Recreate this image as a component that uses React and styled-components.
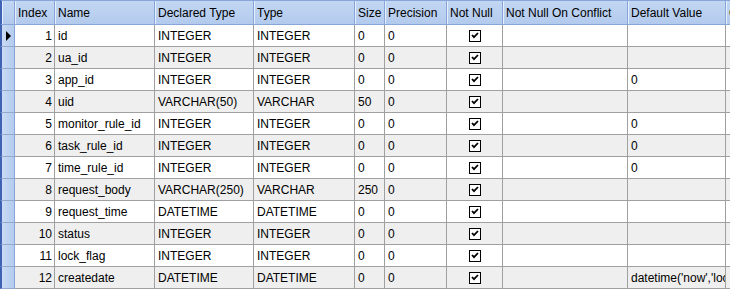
import React from 'react';
import styled, { createGlobalStyle } from 'styled-components';

const GlobalStyle = createGlobalStyle`
  body {
    margin: 0;
    background: #fff;
    font-family: "Liberation Sans", Arial, sans-serif;
  }
`;

const columns = [
  { key: 'index', label: 'Index', width: 40, align: 'right' },
  { key: 'name', label: 'Name', width: 100 },
  { key: 'declared', label: 'Declared Type', width: 99 },
  { key: 'type', label: 'Type', width: 101 },
  { key: 'size', label: 'Size', width: 30 },
  { key: 'precision', label: 'Precision', width: 62 },
  { key: 'notNull', label: 'Not Null', width: 56, align: 'center' },
  { key: 'conflict', label: 'Not Null On Conflict', width: 125 },
  { key: 'def', label: 'Default Value', width: 98 },
  { key: 'collate', label: 'Collate', width: 100 },
];

const rows = [
  ['id', 'INTEGER', 'INTEGER', '0', '0', ''],
  ['ua_id', 'INTEGER', 'INTEGER', '0', '0', ''],
  ['app_id', 'INTEGER', 'INTEGER', '0', '0', '0'],
  ['uid', 'VARCHAR(50)', 'VARCHAR', '50', '0', ''],
  ['monitor_rule_id', 'INTEGER', 'INTEGER', '0', '0', '0'],
  ['task_rule_id', 'INTEGER', 'INTEGER', '0', '0', '0'],
  ['time_rule_id', 'INTEGER', 'INTEGER', '0', '0', '0'],
  ['request_body', 'VARCHAR(250)', 'VARCHAR', '250', '0', ''],
  ['request_time', 'DATETIME', 'DATETIME', '0', '0', ''],
  ['status', 'INTEGER', 'INTEGER', '0', '0', ''],
  ['lock_flag', 'INTEGER', 'INTEGER', '0', '0', ''],
  ['createdate', 'DATETIME', 'DATETIME', '0', '0', "datetime('now','localtime')"],
];

const template = `15px ${columns.map((c) => c.width + 'px').join(' ')}`;

const Grid = styled.div`
  width: 730px;
  height: 291px;
  overflow: hidden;
  font-size: 12px;
  color: #000;
`;

const HeaderRow = styled.div`
  display: grid;
  grid-template-columns: ${template};
  height: 25px;
  width: max-content;
`;

const Row = styled.div`
  display: grid;
  grid-template-columns: ${template};
  height: 22px;
  width: max-content;
  background: ${(p) => (p.$alt ? '#efefef' : '#ffffff')};
`;

const HeaderCell = styled.div`
  box-sizing: border-box;
  display: flex;
  align-items: center;
  padding: 1px 3px 0;
  white-space: nowrap;
  overflow: hidden;
  background: linear-gradient(#c3d7f3, #b2caed);
  border-top: 1px solid #87a5d6;
  border-right: 1px solid #87a5d6;
  border-bottom: 1px solid #87a5d6;
  box-shadow: inset 1px 0 0 #e4eefc;
`;

const Corner = styled(HeaderCell)`
  border-left: 2px solid #3e62b4;
`;

const Indicator = styled.div`
  box-sizing: border-box;
  display: flex;
  align-items: center;
  padding-left: 3px;
  background: linear-gradient(90deg, #c9dbf5, #b3cbee);
  border-left: 2px solid #3e62b4;
  border-right: 1px solid #87a5d6;
  border-bottom: 1px solid #93a9cf;
`;

const Arrow = styled.span`
  width: 0;
  height: 0;
  border-top: 5px solid transparent;
  border-bottom: 5px solid transparent;
  border-left: 5px solid #000;
  margin-left: 1px;
`;

const Cell = styled.div`
  box-sizing: border-box;
  display: flex;
  align-items: center;
  justify-content: ${(p) =>
    p.$align === 'right' ? 'flex-end' : p.$align === 'center' ? 'center' : 'flex-start'};
  padding: 0 ${(p) => (p.$align === 'right' ? '2px' : '3px')} 0 3px;
  white-space: nowrap;
  overflow: hidden;
  border-right: 1px solid #a0a0a0;
  border-bottom: 1px solid #a0a0a0;
`;

const Check = styled.span`
  box-sizing: border-box;
  width: 12px;
  height: 12px;
  border: 1px solid #000;
  background: #fff;
  display: flex;
  align-items: center;
  justify-content: center;
  margin-left: 1px;
`;

const CheckBox = () => (
  <Check>
    <svg width="8" height="7" viewBox="0 0 8 7">
      <path d="M1 3 L3 5.2 L7 1" fill="none" stroke="#000" strokeWidth="1.8" />
    </svg>
  </Check>
);

const App = () => {
  return (
    <>
      <GlobalStyle />
      <Grid>
        <HeaderRow>
          <Corner />
          {columns.map((c) => (
            <HeaderCell key={c.key}>{c.label}</HeaderCell>
          ))}
        </HeaderRow>
        {rows.map((r, i) => (
          <Row key={i} $alt={i % 2 === 1}>
            <Indicator>{i === 0 && <Arrow />}</Indicator>
            <Cell $align="right">{i + 1}</Cell>
            <Cell>{r[0]}</Cell>
            <Cell>{r[1]}</Cell>
            <Cell>{r[2]}</Cell>
            <Cell>{r[3]}</Cell>
            <Cell>{r[4]}</Cell>
            <Cell $align="center">
              <CheckBox />
            </Cell>
            <Cell />
            <Cell>{r[5]}</Cell>
            <Cell />
          </Row>
        ))}
      </Grid>
    </>
  );
};

export default App;
